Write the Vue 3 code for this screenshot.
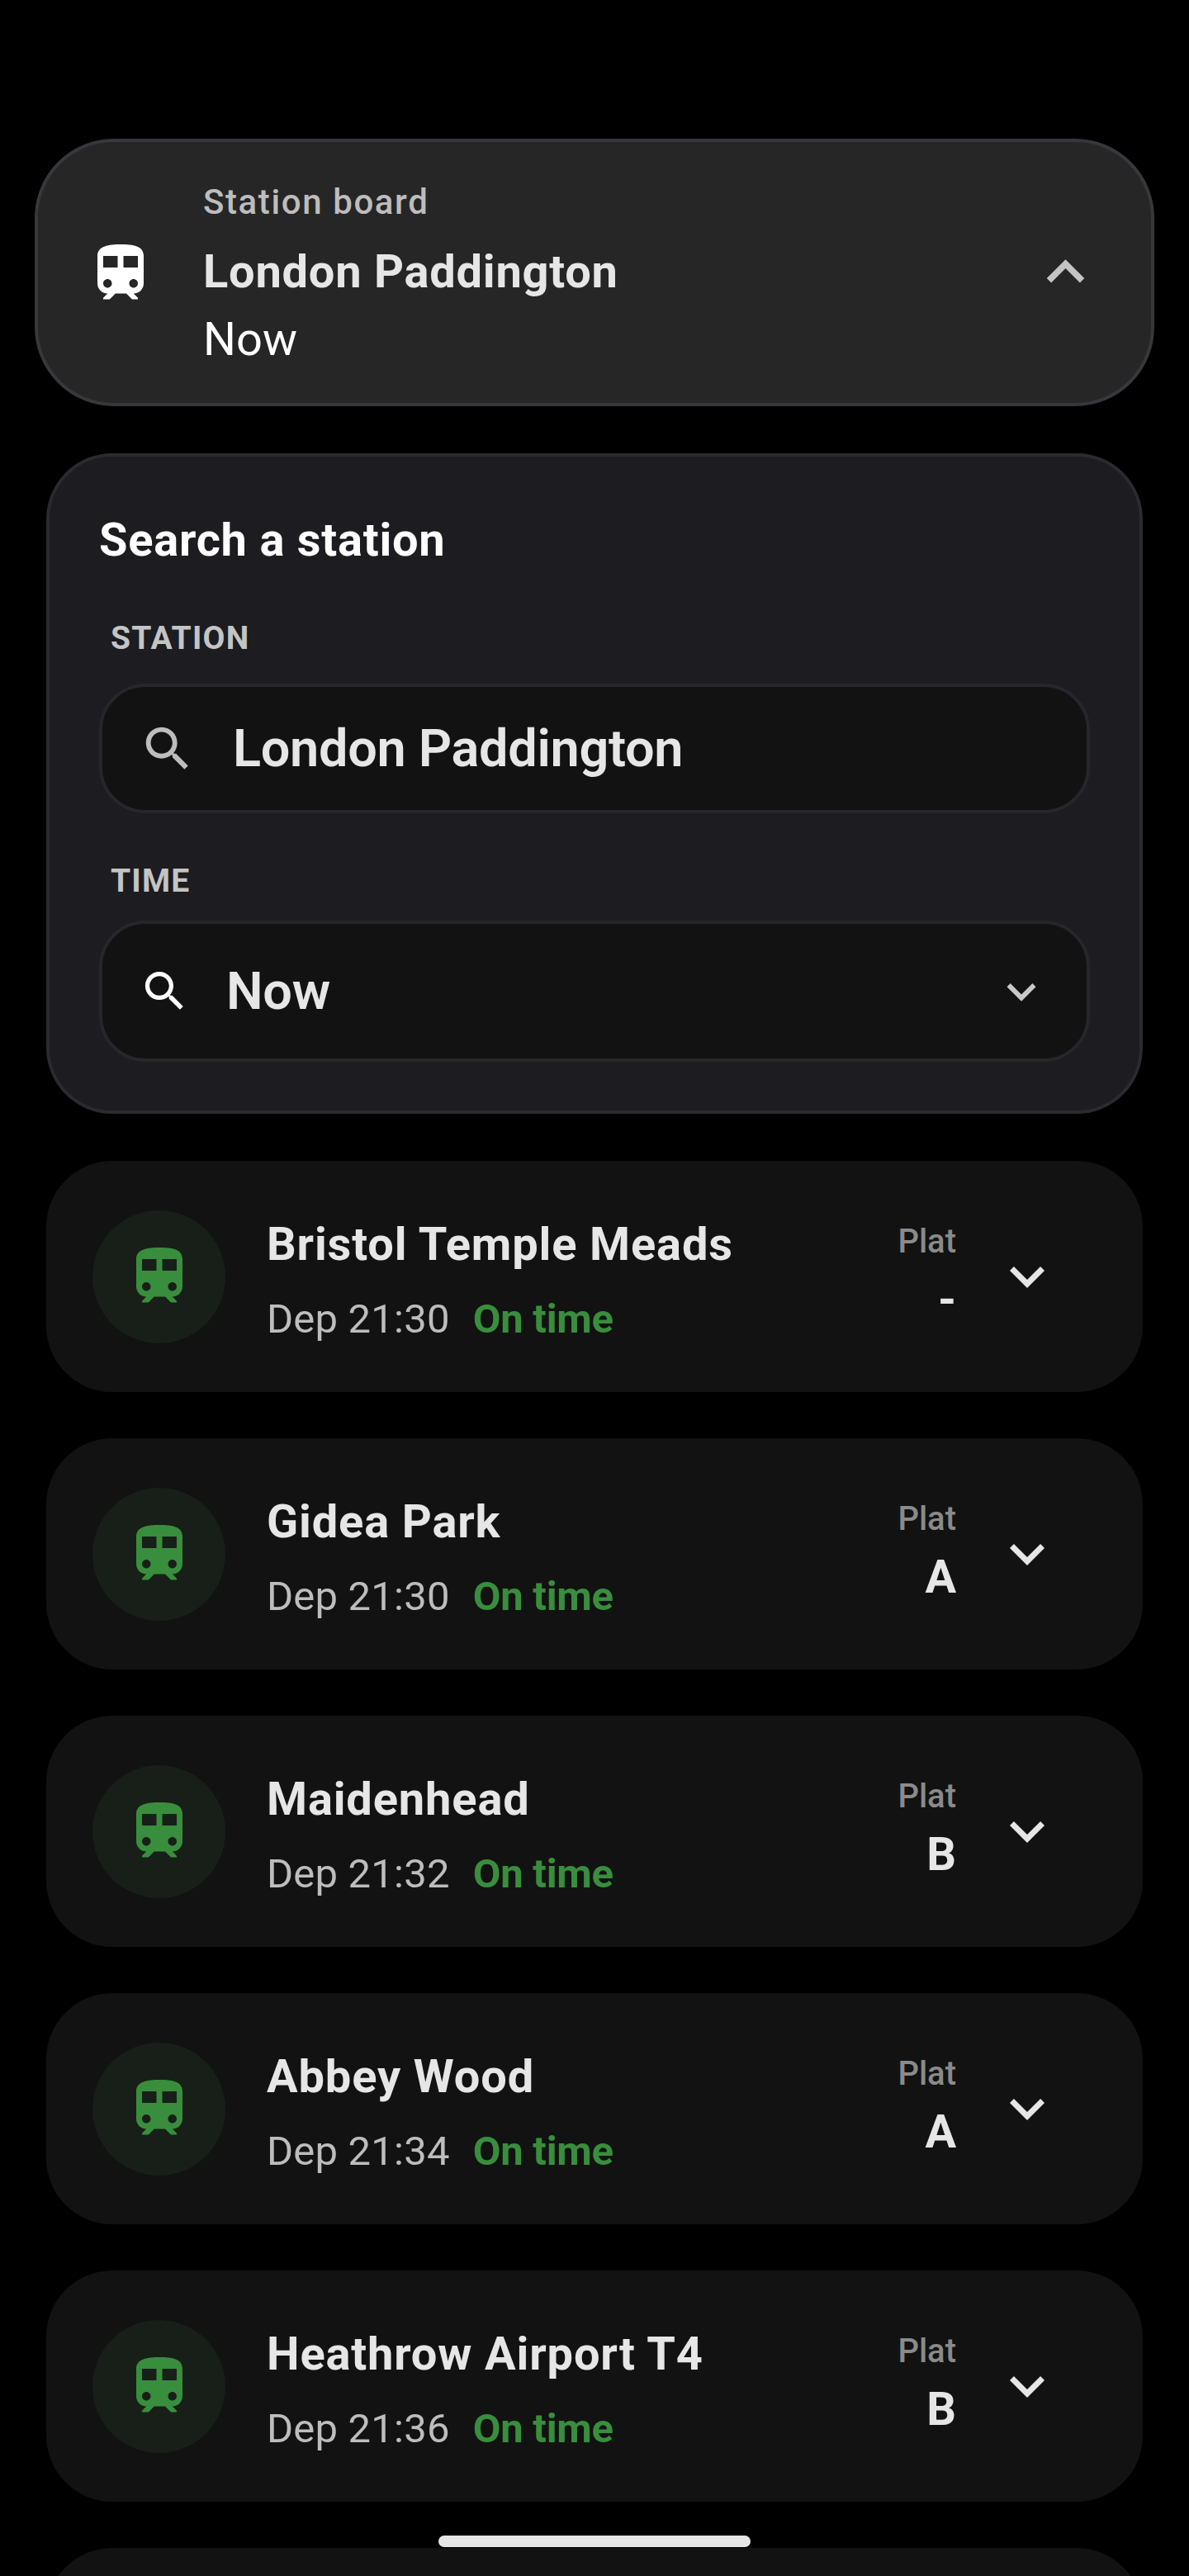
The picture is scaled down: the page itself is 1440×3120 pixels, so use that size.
<script setup>
const trainPath = 'M12 2c-4 0-8 .5-8 4v9.5C4 17.43 5.57 19 7.5 19L6 20.5v.5h2.23l2-2H14l2 2h2v-.5L16.5 19c1.93 0 3.5-1.57 3.5-3.5V6c0-3.5-3.58-4-8-4zM7.5 17c-.83 0-1.5-.67-1.5-1.5S6.67 14 7.5 14s1.5.67 1.5 1.5S8.33 17 7.5 17zm3.5-7H6V6h5v4zm2 0V6h5v4h-5zm3.5 7c-.83 0-1.5-.67-1.5-1.5s.67-1.5 1.5-1.5 1.5.67 1.5 1.5-.67 1.5-1.5 1.5z'
const searchPath = 'M15.5 14h-.79l-.28-.27C15.41 12.59 16 11.11 16 9.5 16 5.91 13.09 3 9.5 3S3 5.91 3 9.5 5.91 16 9.5 16c1.61 0 3.09-.59 4.23-1.57l.27.28v.79l5 4.99L20.49 19l-4.99-5zm-6 0C7.01 14 5 11.99 5 9.5S7.01 5 9.5 5 14 7.01 14 9.5 11.99 14 9.5 14z'
const moreDown = 'M16.59 8.59L12 13.17 7.41 8.59 6 10l6 6 6-6z'
const moreUp = 'M12 8l-6 6 1.41 1.41L12 10.83l4.59 4.58L18 14z'
const services = [
  { name: 'Bristol Temple Meads', time: '21:30', plat: '-' },
  { name: 'Gidea Park', time: '21:30', plat: 'A' },
  { name: 'Maidenhead', time: '21:32', plat: 'B' },
  { name: 'Abbey Wood', time: '21:34', plat: 'A' },
  { name: 'Heathrow Airport T4', time: '21:36', plat: 'B' },
]
</script>

<template>
  <div class="screen">
    <header class="summary">
      <svg class="summary-train" viewBox="0 0 24 24"><path :d="trainPath" /></svg>
      <div class="summary-text">
        <div class="summary-kicker">Station board</div>
        <div class="summary-title">London Paddington</div>
        <div class="summary-sub">Now</div>
      </div>
      <svg class="summary-chevron" viewBox="0 0 24 24"><path :d="moreUp" /></svg>
    </header>

    <section class="search">
      <h2 class="search-title">Search a station</h2>
      <div class="field-label">STATION</div>
      <div class="input input-station">
        <svg class="input-icon" viewBox="0 0 24 24"><path :d="searchPath" /></svg>
        <span class="input-value">London Paddington</span>
      </div>
      <div class="field-label field-label-time">TIME</div>
      <div class="input input-time">
        <svg class="input-icon-time" viewBox="0 0 24 24"><path :d="searchPath" /></svg>
        <span class="input-value">Now</span>
        <svg class="input-chevron" viewBox="0 0 24 24"><path :d="moreDown" /></svg>
      </div>
    </section>

    <div class="list">
      <article v-for="s in services" :key="s.name" class="row">
        <div class="badge">
          <svg class="badge-train" viewBox="0 0 24 24"><path :d="trainPath" /></svg>
        </div>
        <div class="row-main">
          <div class="row-name">{{ s.name }}</div>
          <div class="row-meta">
            <span class="row-dep">Dep {{ s.time }}</span>
            <span class="row-status">On time</span>
          </div>
        </div>
        <div class="plat">
          <div class="plat-label">Plat</div>
          <div class="plat-value">{{ s.plat }}</div>
        </div>
        <svg class="row-chevron" viewBox="0 0 24 24"><path :d="moreDown" /></svg>
      </article>
      <article class="row"></article>
    </div>

    <div class="home-indicator"></div>
  </div>
</template>

<style>
html, body { margin: 0; background: #000; }
</style>

<style scoped>
.screen {
  position: relative;
  width: 1440px;
  height: 3120px;
  overflow: hidden;
  background: #000;
  padding-top: 168px;
  box-sizing: border-box;
  font-family: Roboto, "Liberation Sans", sans-serif;
}
.summary {
  box-sizing: border-box;
  margin: 0 42px;
  height: 324px;
  background: #262626;
  border: 4px solid #37373c;
  border-radius: 96px;
  padding: 45px 0 40px 58px;
  display: flex;
  align-items: center;
}
.summary-train { width: 84px; height: 84px; fill: #fff; flex: none; margin-top: -3px; }
.summary-text { margin-left: 58px; flex: 1; }
.summary-kicker { font-size: 42px; line-height: 56px; font-weight: 500; letter-spacing: 1.6px; color: #bdbdbd; }
.summary-title { font-size: 56px; line-height: 74px; font-weight: 700; letter-spacing: 0.75px; color: #e6e6e6; margin-top: 19px; }
.summary-sub { font-size: 56px; line-height: 74px; color: #fff; margin-top: 8px; }
.summary-chevron { width: 91px; height: 91px; fill: #c4c4c4; flex: none; margin: -7px 58px 0 0; }

.search {
  box-sizing: border-box;
  margin: 57px 56px 0;
  background: #1c1c21;
  border: 4px solid #2a2a2f;
  border-radius: 80px;
  padding: 64px 60px 59px;
}
.search-title { margin: 0; font-size: 56px; line-height: 74px; font-weight: 700; letter-spacing: 0.75px; color: #fff; }
.field-label { margin: 56px 0 0 14px; font-size: 39px; line-height: 52px; font-weight: 700; letter-spacing: 1.2px; color: #c4c4c4; }
.input {
  box-sizing: border-box;
  background: #121212;
  border: 4px solid #26262b;
  border-radius: 56px;
  display: flex;
  align-items: center;
  padding-left: 44px;
  padding-right: 44px;
}
.input-station { height: 157px; margin-top: 29px; }
.input-time { height: 171px; margin-top: 22px; }
.input-icon { width: 70px; height: 70px; fill: #bdbdbd; flex: none; }
.input-icon-time { width: 63px; height: 63px; fill: #fff; flex: none; }
.input-value { font-size: 63px; line-height: 84px; font-weight: 600; letter-spacing: -0.3px; color: #e6e6e6; }
.input-station .input-value { margin-left: 44px; }
.input-time .input-value { margin-left: 43px; flex: 1; }
.input-chevron { width: 70px; height: 70px; fill: #c8c8c8; flex: none; }

.list { margin: 57px 56px 0; display: flex; flex-direction: column; gap: 56px; }
.row {
  box-sizing: border-box;
  height: 280px;
  background: #121212;
  border-radius: 80px;
  display: flex;
  align-items: center;
  padding-left: 56px;
  flex: none;
}
.badge {
  width: 161px;
  height: 161px;
  border-radius: 50%;
  background: #181f18;
  display: flex;
  align-items: center;
  justify-content: center;
  flex: none;
}
.badge-train { width: 84px; height: 84px; fill: #388e3c; }
.row-main { margin: 8px 0 0 50px; flex: 1; }
.row-name { font-size: 56px; line-height: 74px; font-weight: 700; letter-spacing: 0.85px; color: #e6e6e6; }
.row-meta { margin-top: 22px; font-size: 49px; line-height: 64px; }
.row-dep { color: #bdbdbd; letter-spacing: 0.2px; }
.row-status { margin-left: 28px; font-weight: 700; letter-spacing: -0.25px; color: #388e3c; }
.plat { text-align: right; width: 80px; margin-top: -4px; }
.plat-label { font-size: 40px; line-height: 52px; font-weight: 500; color: #8a8a8a; }
.plat-value { font-size: 56px; line-height: 74px; font-weight: 700; color: #e6e6e6; margin-top: 7px; }
.row-chevron { width: 84px; height: 84px; fill: #e6e6e6; flex: none; margin: 0 98px 0 44px; }

.home-indicator {
  position: absolute;
  left: 531px;
  top: 3071px;
  width: 378px;
  height: 14px;
  border-radius: 7px;
  background: #e6e6e6;
}
</style>
